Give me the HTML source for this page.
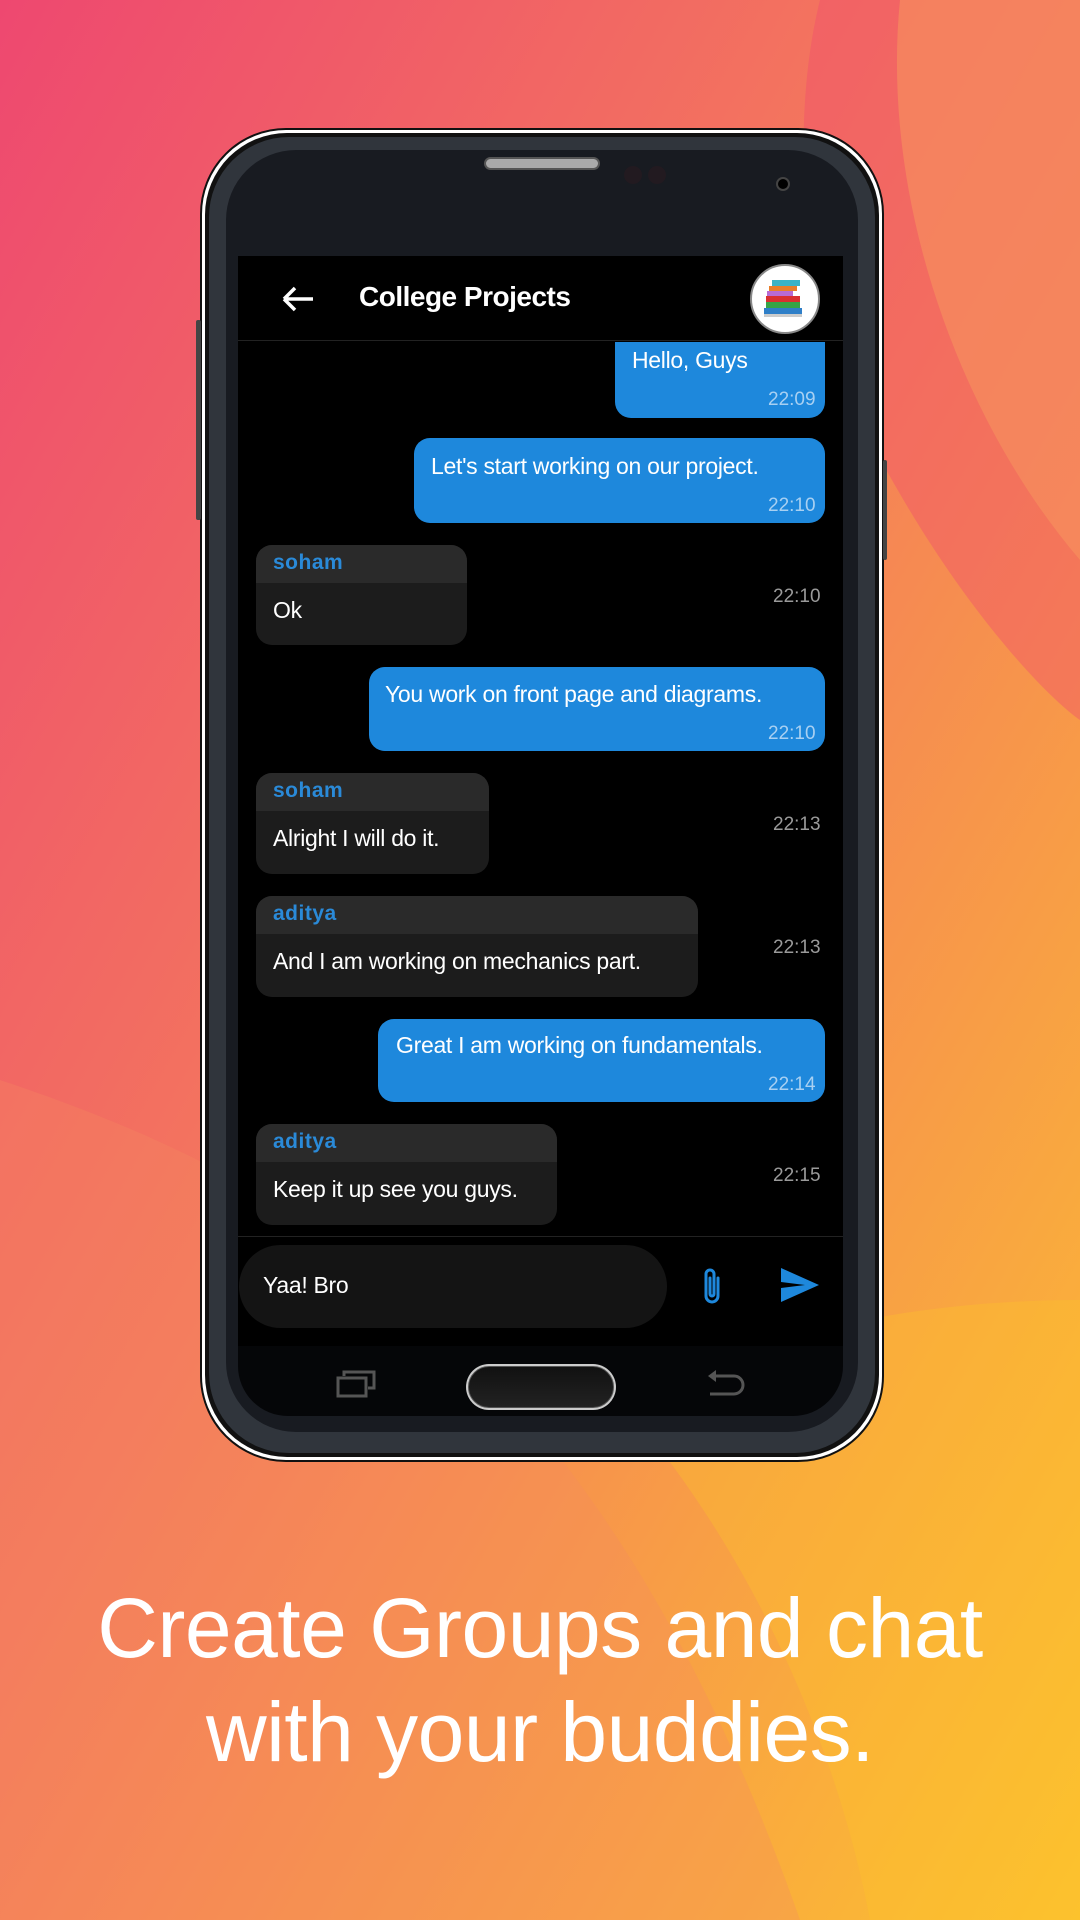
<!DOCTYPE html>
<html><head><meta charset="utf-8"><style>
*{margin:0;padding:0;box-sizing:border-box}
body{width:1080px;height:1920px;position:relative;overflow:hidden;font-family:"Liberation Sans",sans-serif;background:#f6884f}
.abs{position:absolute}
.msg{position:absolute;font-size:23px;color:#fff;white-space:nowrap;letter-spacing:-0.3px}
.rb{background:#1e88dc;border-radius:16px}
.lb{background:#1c1c1c;border-radius:16px;overflow:hidden}
.lb .nm{background:#2a2a2a;height:38px;color:#2a8ad8;font-weight:bold;font-size:21px;padding:6px 17px;letter-spacing:0.5px}
.lb .tx{padding:14px 17px}
.t{position:absolute;font-size:19px;color:#a8d0f2}
.tg{position:absolute;font-size:19px;color:#9a9a9a}
</style></head><body>
<svg class="abs" style="left:0;top:0" width="1080" height="1920" viewBox="0 0 1080 1920">
<defs>
<linearGradient id="g1" x1="0" y1="0" x2="1" y2="1"><stop offset="0" stop-color="#ee4870"/><stop offset="0.45" stop-color="#f47a5c"/><stop offset="1" stop-color="#fcc22f"/></linearGradient>
</defs>
<rect width="1080" height="1920" fill="url(#g1)"/>
<path d="M0 0H820C790 120 800 300 860 420C950 600 1050 700 1080 720V0Z" fill="#ef4a6d" opacity="0.4"/>
<path d="M900 0C880 200 960 420 1080 560V0Z" fill="#f6935d" opacity="0.6"/>
<path d="M0 1080C300 1180 600 1350 800 1920H0Z" fill="#f58a60" opacity="0.3"/>
<path d="M620 1400C760 1560 840 1760 870 1920H1080V1300C900 1300 740 1340 620 1400Z" fill="#fdc22c" opacity="0.35"/>
</svg>
<!-- phone -->
<div class="abs" style="left:200px;top:128px;width:684px;height:1334px;border-radius:86px;background:#fff;border:2px solid #111"></div>
<div class="abs" style="left:205px;top:133px;width:674px;height:1324px;border-radius:82px;background:#111;"></div>
<div class="abs" style="left:209px;top:137px;width:666px;height:1316px;border-radius:80px;background:#30353c;"></div>
<div class="abs" style="left:226px;top:150px;width:632px;height:1282px;border-radius:70px;background:#181b21;"></div>
<div class="abs" style="left:196px;top:320px;width:5px;height:200px;background:#444;border-radius:2px"></div>
<div class="abs" style="left:883px;top:460px;width:4px;height:100px;background:#444;border-radius:2px"></div>
<div class="abs" style="left:484px;top:157px;width:116px;height:13px;border-radius:7px;background:#aaa;border:2px solid #555"></div>
<div class="abs" style="left:624px;top:166px;width:18px;height:18px;border-radius:50%;background:#221a20"></div>
<div class="abs" style="left:648px;top:166px;width:18px;height:18px;border-radius:50%;background:#221a20"></div>
<div class="abs" style="left:776px;top:177px;width:14px;height:14px;border-radius:50%;background:#000;border:2px solid #444"></div>
<!-- screen -->
<div class="abs" style="left:238px;top:256px;width:605px;height:1090px;background:#000"></div>
<div class="abs" style="left:238px;top:1346px;width:605px;height:70px;background:#050608;border-radius:0 0 50px 50px"></div>
<!-- header -->
<svg class="abs" style="left:280px;top:284px" width="36" height="30" viewBox="0 0 36 30"><path d="M4 15H33M4 15L15 4M4 15L15 26" stroke="#fff" stroke-width="3.5" fill="none"/></svg>
<div class="msg" style="left:359px;top:281px;font-size:28px;font-weight:bold;letter-spacing:-0.5px">College Projects</div>
<div class="abs" style="left:750px;top:264px;width:70px;height:70px;border-radius:50%;background:#fff;border:2px solid #888"></div>
<svg class="abs" style="left:760px;top:276px" width="50" height="46" viewBox="0 0 50 46"><rect x="12" y="4" width="28" height="6" fill="#3bb3c6"/><rect x="9" y="10" width="28" height="5" fill="#e97e2a"/><rect x="7" y="15" width="26" height="5" fill="#b86bd3"/><rect x="6" y="20" width="34" height="6" fill="#d93030"/><rect x="6" y="26" width="34" height="6" fill="#36a447"/><rect x="4" y="32" width="38" height="6" fill="#2f7fc8"/><rect x="4" y="38" width="38" height="3" fill="#ccc"/></svg>
<div class="abs" style="left:238px;top:340px;width:605px;height:1px;background:#222"></div>
<!-- messages -->
<div class="rb abs" style="left:615px;top:342px;width:210px;height:76px;border-radius:0 0 16px 16px"></div>
<div class="msg" style="left:632px;top:347px">Hello, Guys</div><div class="t" style="left:768px;top:389px">22:09</div>
<div class="rb abs" style="left:414px;top:438px;width:411px;height:85px"></div>
<div class="msg" style="left:431px;top:453px">Let's start working on our project.</div><div class="t" style="left:768px;top:495px">22:10</div>
<div class="lb abs" style="left:256px;top:545px;width:211px;height:100px"><div class="nm">soham</div><div class="tx msg" style="position:static">Ok</div></div>
<div class="tg" style="left:773px;top:586px">22:10</div>
<div class="rb abs" style="left:369px;top:667px;width:456px;height:84px"></div>
<div class="msg" style="left:385px;top:681px">You work on front page and diagrams.</div><div class="t" style="left:768px;top:723px">22:10</div>
<div class="lb abs" style="left:256px;top:773px;width:233px;height:101px"><div class="nm">soham</div><div class="tx msg" style="position:static">Alright I will do it.</div></div>
<div class="tg" style="left:773px;top:814px">22:13</div>
<div class="lb abs" style="left:256px;top:896px;width:442px;height:101px"><div class="nm">aditya</div><div class="tx msg" style="position:static">And I am working on mechanics part.</div></div>
<div class="tg" style="left:773px;top:937px">22:13</div>
<div class="rb abs" style="left:378px;top:1019px;width:447px;height:83px"></div>
<div class="msg" style="left:396px;top:1032px">Great I am working on fundamentals.</div><div class="t" style="left:768px;top:1074px">22:14</div>
<div class="lb abs" style="left:256px;top:1124px;width:301px;height:101px"><div class="nm">aditya</div><div class="tx msg" style="position:static">Keep it up see you guys.</div></div>
<div class="tg" style="left:773px;top:1165px">22:15</div>
<div class="abs" style="left:238px;top:1236px;width:605px;height:1px;background:#222"></div>
<!-- input -->
<div class="abs" style="left:239px;top:1245px;width:428px;height:83px;border-radius:42px;background:#141414"></div>
<div class="msg" style="left:263px;top:1272px">Yaa! Bro</div>
<svg class="abs" style="left:698px;top:1266px" width="28" height="42" viewBox="0 0 28 42"><path d="M20 12V30A6 6 0 0 1 8 30V8A4 4 0 0 1 16 8V28A2 2 0 0 1 12 28V12" stroke="#1e88dc" stroke-width="3" fill="none" stroke-linecap="round"/></svg>
<svg class="abs" style="left:781px;top:1268px" width="38" height="34" viewBox="0 0 38 34"><path d="M0 0L38 17L0 34L0 20L24 17L0 14Z" fill="#1e88dc"/></svg>
<!-- nav -->
<svg class="abs" style="left:336px;top:1368px" width="40" height="30" viewBox="0 0 40 30"><rect x="2" y="10" width="28" height="18" fill="none" stroke="#555" stroke-width="3"/><path d="M8 8V4H38V20H32" fill="none" stroke="#555" stroke-width="3"/></svg>
<div class="abs" style="left:466px;top:1364px;width:150px;height:46px;border-radius:23px;background:#ccc;padding:2px"><div style="width:100%;height:100%;border-radius:21px;background:linear-gradient(#111,#222);border:1px solid #555"></div></div>
<svg class="abs" style="left:704px;top:1368px" width="42" height="32" viewBox="0 0 42 32"><path d="M6 8H30A9 9 0 0 1 30 26H6" fill="none" stroke="#555" stroke-width="3"/><path d="M4 8L12 2V14Z" fill="#555"/></svg>
<!-- caption -->
<div class="abs" style="left:0;top:1576px;width:1080px;text-align:center;color:#fff;font-size:84px;line-height:104px;letter-spacing:-0.5px">Create Groups and chat<br>with your buddies.</div>
</body></html>
